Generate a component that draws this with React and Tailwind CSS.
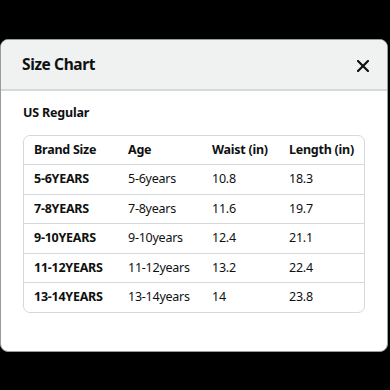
import React from "react";

const rows = [
  ["5-6YEARS", "5-6years", "10.8", "18.3"],
  ["7-8YEARS", "7-8years", "11.6", "19.7"],
  ["9-10YEARS", "9-10years", "12.4", "21.1"],
  ["11-12YEARS", "11-12years", "13.2", "22.4"],
  ["13-14YEARS", "13-14years", "14", "23.8"],
];

export default function App() {
  return (
    <div
      className="w-[390px] h-[390px] bg-black pt-[39px] pr-[2px] overflow-hidden"
      style={{ fontFamily: '"Noto Sans", "Open Sans", Arial, sans-serif' }}
    >
      <div className="h-[313px] bg-white rounded-[8px] border border-[#9a9a9a] overflow-hidden text-[#0f1111]">
        <div className="h-[51px] bg-[#f0f2f2] border-b-2 border-[#d5d9d9] flex items-center justify-between pl-[21px] pr-[18px]">
          <span className="text-[15.5px] font-bold leading-none tracking-[-0.4px]">Size Chart</span>
          <svg width="12" height="12" viewBox="0 0 12 12" className="mt-[2px]">
            <path d="M1 1L11 11M11 1L1 11" stroke="#0f1111" strokeWidth="2.2" strokeLinecap="square" />
          </svg>
        </div>
        <div className="pl-[22px] pt-[16px]">
          <div className="text-[12.5px] font-bold leading-none h-[16px] tracking-[-0.2px]">US Regular</div>
          <div className="mt-[12px] w-[342px] border border-[#d5d9d9] rounded-[7px] overflow-hidden tracking-[-0.25px]">
            <div className="grid grid-cols-[94px_84px_77px_1fr] h-[28px] items-center pl-[10px] text-[12.5px] font-bold">
              <span>Brand Size</span>
              <span>Age</span>
              <span>Waist (in)</span>
              <span>Length (in)</span>
            </div>
            {rows.map((r) => (
              <div
                key={r[0]}
                className="grid grid-cols-[94px_84px_77px_1fr] h-[29.6px] items-center pl-[10px] text-[12.5px] border-t border-[#d5d9d9]"
              >
                <span className="font-bold">{r[0]}</span>
                <span>{r[1]}</span>
                <span>{r[2]}</span>
                <span>{r[3]}</span>
              </div>
            ))}
          </div>
        </div>
      </div>
    </div>
  );
}
